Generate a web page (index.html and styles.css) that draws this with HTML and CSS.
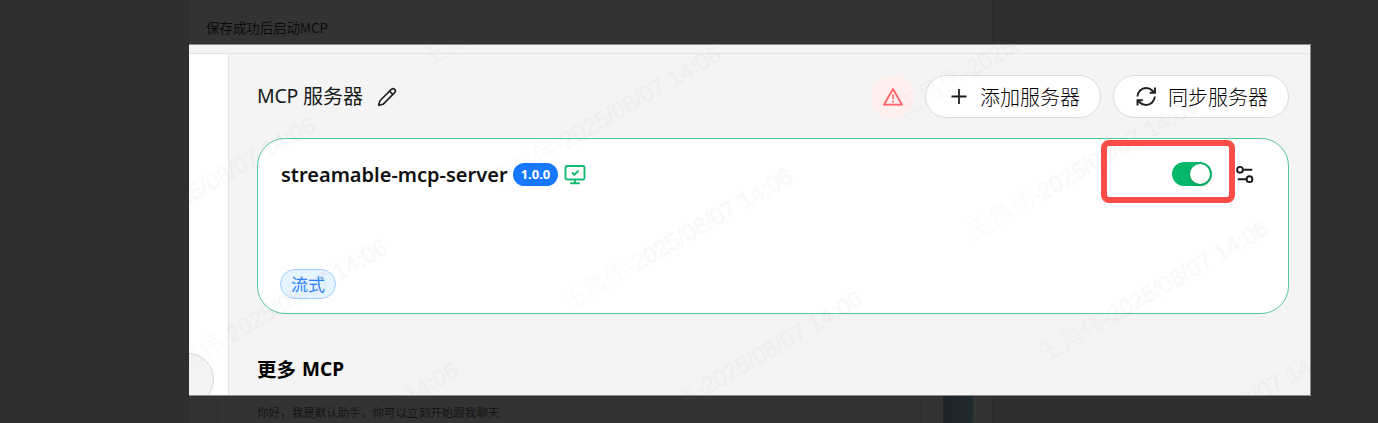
FILE: index.html
```
<!DOCTYPE html>
<html lang="zh-CN">
<head>
<meta charset="utf-8">
<title>MCP 服务器</title>
<link rel="stylesheet" href="styles.css">
</head>
<body>
<div class="backdrop">
  <div class="doc">
    <p class="doc-line">保存成功后启动MCP</p>
    <div class="doc-foot">
      <p class="doc-quote">你好，我是默认助手。你可以立刻开始跟我聊天</p>
      <span class="doc-thumb"></span>
    </div>
  </div>
</div>
<main class="viewer">
  <div class="topbar"></div>
  <div class="body">
    <aside class="side"><span class="side-circle"></span></aside>
    <section class="content">
      <header class="head">
        <h1 class="title"><span class="title-latin">MCP</span><span class="title-cjk">服务器</span></h1>
        <svg class="pencil" width="20" height="20" viewBox="0 0 24 24" fill="none" stroke="#222" stroke-width="2" stroke-linecap="round" stroke-linejoin="round"><path d="M21.17 6.81a1 1 0 0 0-3.98-3.98L3.84 16.17a2 2 0 0 0-.5.83l-1.32 4.35a.5.5 0 0 0 .62.62l4.35-1.32a2 2 0 0 0 .83-.5z"/><path d="m15 5 4 4"/></svg>
        <div class="actions">
          <span class="alert"><svg width="22" height="22" viewBox="0 0 22 22" fill="none" stroke="#ff5f62" stroke-width="1.8" stroke-linejoin="round"><path d="M11 3 20 18.600H2z"/><path d="M11 8.300v5M11 14.700v1.700" stroke-width="1.500"/></svg></span>
          <button class="btn"><svg width="20" height="20" viewBox="0 0 20 20" fill="none" stroke="#1f1f1f" stroke-width="1.800"><path d="M10 2v15M2.500 9.500h15"/></svg><span>添加服务器</span></button>
          <button class="btn btn-sync"><svg width="24" height="24" viewBox="0 0 24 24" fill="none" stroke="#1f1f1f" stroke-width="1.900"><path d="M3.500 11.500a8.700 8.700 0 0 1 8.500-8.500 9.400 9.400 0 0 1 6.600 2.700L21 7.800"/><path d="M21 2.500v5.300h-5.300"/><path d="M20.800 11.500a8.700 8.700 0 0 1-8.800 8.500 9.400 9.400 0 0 1-6.600-2.700L3.500 15.500"/><path d="M8.800 15.300H3.500v5.300"/></svg><span>同步服务器</span></button>
        </div>
      </header>
      <article class="card">
        <div class="card-head">
          <span class="name">streamable-mcp-server</span>
          <span class="version">1.0.0</span>
          <svg class="monitor" width="24" height="24" viewBox="0 0 24 24" fill="none" stroke="#12bb72" stroke-width="1.900" stroke-linecap="round" stroke-linejoin="round"><path d="m9.500 11 1.800 1.800 3.700-3.600"/><rect x="2.500" y="4" width="19" height="13.500" rx="1.500"/><path d="M12 17.500v3.500M8 21.300h8"/></svg>
          <span class="switch"><span class="knob"></span></span>
          <svg class="settings" width="20" height="20" viewBox="0 0 20 20" fill="none" stroke="#1a1a1a" stroke-width="1.900" stroke-linecap="round"><circle cx="5" cy="5.800" r="2.900"/><path d="M9 5.800h7.500M3.500 15.200h8"/><circle cx="14.500" cy="15.200" r="2.900"/></svg>
        </div>
        <span class="tag">流式</span>
      </article>
      <h2 class="more"><span>更多</span><span class="more-latin">MCP</span></h2>
    </section>
  </div>
  <svg class="watermark" width="1121" height="351" viewBox="189 45 1121 351">
    <defs><g id="mark"><g transform="rotate(-30)"><text x="-254" y="8.500">王昌伟</text><text class="stamp" x="-182" y="8.500" textLength="189">-2025/08/07 14:06</text></g></g></defs>
    <use href="#mark" x="307" y="126"/><use href="#mark" x="379" y="248"/><use href="#mark" x="450" y="371"/>
    <use href="#mark" x="643" y="-67"/><use href="#mark" x="713" y="55"/><use href="#mark" x="784" y="177"/><use href="#mark" x="854" y="300"/><use href="#mark" x="925" y="422"/>
    <use href="#mark" x="1119" y="-17"/><use href="#mark" x="1190" y="106"/><use href="#mark" x="1260" y="229"/><use href="#mark" x="1331" y="351"/>
  </svg>
  <span class="highlight"></span>
</main>
</body>
</html>
```

FILE: styles.css
```
* { box-sizing: border-box; }
body {
  margin: 0;
  width: 1378px;
  height: 423px;
  overflow: hidden;
  position: relative;
  background: #2f2f2f;
  font-family: "Noto Sans", "Noto Sans CJK SC", sans-serif;
}
h1, h2, p { margin: 0; }
svg { display: block; flex: none; }
.backdrop { display: flex; height: 423px; padding-left: 188px; }
.doc {
  width: 805px;
  display: flex;
  flex-direction: column;
  justify-content: space-between;
  background: #333;
  border-left: 1px solid #2b2b2b;
  border-right: 1px solid #2b2b2b;
}
.doc-line {
  padding: 16px 0 0 17px;
  font: 13.450px/22px "Noto Sans CJK SC", sans-serif;
  color: #0d0d0d;
}
.doc-foot { display: flex; height: 28px; padding: 0 19px 0 28px; }
.doc-quote {
  width: 704px;
  flex: none;
  padding-left: 39px;
  border-left: 1px solid #2e2e2e;
  border-right: 1px solid #2e2e2e;
  font: 11.550px/34px "Noto Sans CJK SC", sans-serif;
  color: #151515;
}
.doc-thumb { width: 30px; flex: none; margin-left: 22px; background: linear-gradient(90deg, #1b2327, #1f2a2f); }
.viewer {
  position: absolute;
  left: 189px;
  top: 44px;
  width: 1122px;
  height: 352px;
  overflow: hidden;
  display: flex;
  flex-direction: column;
  background: #f4f4f4;
  border: solid #8c8c8c;
  border-width: 1px 1px 1px 0;
}
.topbar { flex: none; height: 9px; border-bottom: 1px solid #e4e4e4; }
.body { flex: 1; display: flex; min-height: 0; }
.side { width: 40px; flex: none; overflow: hidden; background: #fff; border-right: 1px solid #e6e6e6; padding-top: 299px; }
.side-circle { display: block; width: 52px; height: 52px; margin-left: -27px; border: 1px solid #d9d9d9; border-radius: 50%; background: #f4f4f4; }
.content { flex: 1; padding: 21px 21px 0 28px; }
.head { display: flex; align-items: center; height: 43px; }
.title { display: flex; align-items: center; gap: 5px; padding-bottom: 2px; font-size: 20px; line-height: 40px; font-weight: 400; color: #1a1a1a; }
.title-latin { width: 41px; font-size: 19.500px; letter-spacing: -.2px; white-space: nowrap; }
.title-cjk { font-family: "Noto Sans CJK SC", sans-serif; }
.pencil { margin-left: 14px; }
.actions { display: flex; margin-left: auto; gap: 12px; }
.alert { width: 43px; height: 43px; margin-right: -1px; border-radius: 50%; background: #fff0ef; display: flex; align-items: center; justify-content: center; }
.btn {
  width: 176px;
  height: 43px;
  display: flex;
  align-items: center;
  justify-content: center;
  gap: 11px;
  padding: 0 0 0 3px;
  border: 1px solid #dcdcdc;
  border-radius: 22px;
  background: #fff;
  font: 300 20px/40px "Noto Sans CJK SC", sans-serif;
  color: #000;
}
.btn-sync { gap: 10px; padding: 0; }
.card { height: 176px; margin-top: 20px; padding: 21px 33px 14px 22px; display: flex; flex-direction: column; justify-content: space-between; background: #fff; border: 1px solid #52c797; border-radius: 28px; }
.card-head { display: flex; align-items: center; height: 28px; }
.name { width: 228px; padding-left: 1px; font-size: 20px; font-weight: 600; color: #111; white-space: nowrap; }
.version { width: 45px; height: 23px; margin-left: 5px; border-radius: 12px; background: #1677ff; color: #fff; font-size: 13px; font-weight: 700; line-height: 23px; text-align: center; }
.monitor { margin-left: 5px; }
.switch { width: 40px; height: 24px; margin-left: auto; padding: 2px; border-radius: 12px; background: #07b86b; display: flex; justify-content: flex-end; }
.knob { width: 20px; height: 20px; border-radius: 50%; background: #fff; box-shadow: 0 2px 4px rgba(0,35,11,.2); }
.settings { margin-left: 23px; }
.tag { width: 56px; height: 30px; border: 1px solid #9bd0ff; border-radius: 16px; background: #e6f4ff; color: #2f83fc; font: 17px/28px "Noto Sans CJK SC", sans-serif; text-align: center; }
.more { display: flex; align-items: center; gap: 6px; margin-top: 35px; font: 700 19.500px/40px "Noto Sans CJK SC", sans-serif; color: #000; }
.more-latin { font-family: "Noto Sans", sans-serif; font-size: 19px; }
.watermark { position: absolute; left: 0; top: 0; pointer-events: none; font: 300 24px "Noto Sans CJK SC", sans-serif; fill: #000; opacity: .021; }
.stamp { font: 23.500px "Liberation Sans", sans-serif; stroke: #000; stroke-width: .7px; }
.highlight { position: absolute; left: 912px; top: 95px; width: 134px; height: 63px; border: 6px solid #f94b47; border-radius: 8px; }
```
